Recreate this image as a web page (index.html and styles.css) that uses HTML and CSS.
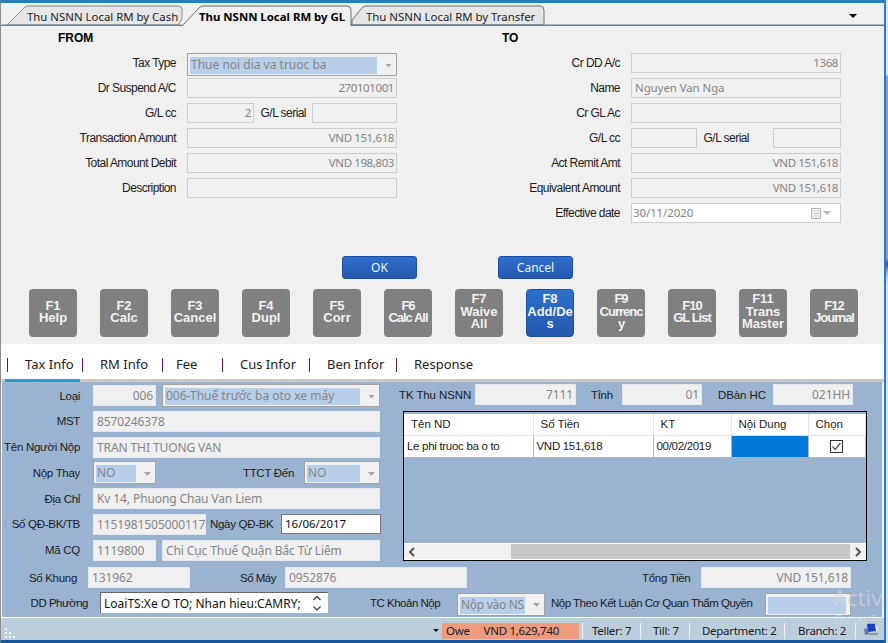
FILE: index.html
```html
<!DOCTYPE html>
<html lang="vi">
<head>
    <meta charset="UTF-8">
    <title>Thu NSNN Local RM by GL</title>
    <meta name="viewport" content="width=device-width, initial-scale=1.0">
    <link rel="stylesheet" href="styles.css">
</head>
<body>
    <div class="window">
        <div class="tabstrip">
            <svg class="tab-shapes" width="884" height="23" viewBox="0 0 884 23">
                <path d="M7 22 L25 4 Q26 3 28 3 L178 3 Q182 3 182 6 L182 16 L178 22 Z" fill="#e6e6e6" stroke="#8a8a8a"/>
                <path d="M352 22 L352 17 L362 5 Q364 3 366 3 L540 3 Q544 3 544 7 L544 22 Z" fill="#e6e6e6" stroke="#6f6f6f"/>
                <path d="M0 22.5 H182 M351 22.5 H884" stroke="#6d7d8c" stroke-width="2"/>
                <path d="M182 23 L199 5 Q201 3 203 3 L347 3 Q351 3 351 7 L351 23" fill="#f0f0f0" stroke="#6f6f6f"/>
                <path d="M849 11 H857 L853 15 Z" fill="#000"/>
            </svg>
            <span class="tab tab-cash">Thu NSNN Local RM by Cash</span>
            <span class="tab tab-gl">Thu NSNN Local RM by GL</span>
            <span class="tab tab-transfer">Thu NSNN Local RM by Transfer</span>
        </div>

        <div class="top-panel">
            <div class="transfer">
                <div class="side">
                    <h2>FROM</h2>
                    <div class="row">
                        <label>Tax Type</label>
                        <div class="select tax-select"><span class="picked wide">Thue noi dia va truoc ba</span><i class="caret"></i></div>
                    </div>
                    <div class="row"><label>Dr Suspend A/C</label><div class="field num">270101001</div></div>
                    <div class="row">
                        <label>G/L cc</label>
                        <div class="field num cc-left">2</div>
                        <label class="serial-left">G/L serial</label>
                        <div class="field serial-field-left"></div>
                    </div>
                    <div class="row"><label>Transaction Amount</label><div class="field num">VND 151,618</div></div>
                    <div class="row"><label>Total Amount Debit</label><div class="field num">VND 198,803</div></div>
                    <div class="row"><label>Description</label><div class="field"></div></div>
                </div>
                <div class="side">
                    <h2>TO</h2>
                    <div class="row"><label>Cr DD A/c</label><div class="field num">1368</div></div>
                    <div class="row"><label>Name</label><div class="field">Nguyen Van Nga</div></div>
                    <div class="row"><label>Cr GL Ac</label><div class="field"></div></div>
                    <div class="row">
                        <label>G/L cc</label>
                        <div class="field cc-right"></div>
                        <label class="serial-right">G/L serial</label>
                        <div class="field serial-field-right"></div>
                    </div>
                    <div class="row"><label>Act Remit Amt</label><div class="field num">VND 151,618</div></div>
                    <div class="row"><label>Equivalent Amount</label><div class="field num">VND 151,618</div></div>
                    <div class="row">
                        <label>Effective date</label>
                        <div class="field date-field">
                            <span>30/11/2020</span>
                            <svg width="28" height="14" viewBox="0 0 28 14">
                                <rect x="1.5" y="2.5" width="9" height="10" fill="#f4f4f4" stroke="#b5b5b5"/>
                                <path d="M1.5 5 H10.5 M3 7.5 H9 M3 10 H9" stroke="#c9c9c9"/>
                                <path d="M13 5 H21 L17 9 Z" fill="#b5b5b5"/>
                            </svg>
                        </div>
                    </div>
                </div>
            </div>

            <div class="actions">
                <button class="btn-blue">OK</button>
                <button class="btn-blue">Cancel</button>
            </div>

            <div class="fkeys">
                <button class="fkey">F1<br>Help</button>
                <button class="fkey">F2<br>Calc</button>
                <button class="fkey">F3<br>Cancel</button>
                <button class="fkey">F4<br>Dupl</button>
                <button class="fkey">F5<br>Corr</button>
                <button class="fkey tight">F6<br>Calc All</button>
                <button class="fkey">F7<br>Waive<br>All</button>
                <button class="fkey active">F8<br>Add/De<br>s</button>
                <button class="fkey tight">F9<br>Currenc<br>y</button>
                <button class="fkey tight">F10<br>GL List</button>
                <button class="fkey">F11<br>Trans<br>Master</button>
                <button class="fkey tight">F12<br>Journal</button>
            </div>
        </div>

        <div class="info-tabs">
            <span class="info-tab current">Tax Info</span>
            <span class="info-tab">RM Info</span>
            <span class="info-tab short">Fee</span>
            <span class="info-tab">Cus Infor</span>
            <span class="info-tab">Ben Infor</span>
            <span class="info-tab">Response</span>
        </div>

        <div class="info-panel">
            <div class="info-top">
                <div class="tax-form">
                    <div class="line">
                        <label>Loại</label>
                        <div class="field num w-code">006</div>
                        <div class="select grow"><span class="picked">006-Thuế trước bạ oto xe máy</span><i class="caret"></i></div>
                    </div>
                    <div class="line"><label>MST</label><div class="field grow">8570246378</div></div>
                    <div class="line"><label>Tên Người Nộp</label><div class="field grow">TRAN THI TUONG VAN</div></div>
                    <div class="line">
                        <label>Nộp Thay</label>
                        <div class="select w-code"><span class="picked">NO</span><i class="caret"></i></div>
                        <label class="ttct">TTCT Đến</label>
                        <div class="select w-ttct"><span class="picked">NO</span><i class="caret"></i></div>
                    </div>
                    <div class="line"><label>Địa Chỉ</label><div class="field grow">Kv 14, Phuong Chau Van Liem</div></div>
                    <div class="line">
                        <label>Số QĐ-BK/TB</label>
                        <div class="field w-decision">1151981505000117</div>
                        <label class="decision-date">Ngày QĐ-BK</label>
                        <div class="input-white">16/06/2017</div>
                    </div>
                    <div class="line">
                        <label>Mã CQ</label>
                        <div class="field w-code">1119800</div>
                        <div class="field grow">Chi Cục Thuế Quận Bắc Từ Liêm</div>
                    </div>
                </div>

                <div class="tax-side">
                    <div class="treasury">
                        <label class="tk">TK Thu NSNN</label>
                        <div class="field num w-tk">7111</div>
                        <label class="tinh">Tỉnh</label>
                        <div class="field num w-tinh">01</div>
                        <label class="dban">DBàn HC</label>
                        <div class="field num w-tinh">021HH</div>
                    </div>
                    <div class="grid-box">
                        <table class="grid">
                            <thead>
                                <tr>
                                    <th class="c-name">Tên ND</th>
                                    <th class="c-money">Số Tiền</th>
                                    <th class="c-kt">KT</th>
                                    <th class="c-content">Nội Dung</th>
                                    <th class="c-pick">Chọn</th>
                                </tr>
                            </thead>
                            <tbody>
                                <tr>
                                    <td>Le phi truoc ba o to</td>
                                    <td>VND 151,618</td>
                                    <td>00/02/2019</td>
                                    <td class="cell-focus"></td>
                                    <td class="cell-check">
                                        <svg width="13" height="13" viewBox="0 0 13 13">
                                            <rect x="0.5" y="0.5" width="12" height="12" fill="#fff" stroke="#333"/>
                                            <path d="M2.5 6.5 L5.2 9.5 L10.5 3" fill="none" stroke="#555" stroke-width="1.2"/>
                                        </svg>
                                    </td>
                                </tr>
                            </tbody>
                        </table>
                        <div class="hscroll">
                            <svg width="16" height="16" viewBox="0 0 16 16"><path d="M10 4 L6 8 L10 12" fill="none" stroke="#555" stroke-width="2"/></svg>
                            <div class="thumb"></div>
                            <svg width="16" height="16" viewBox="0 0 16 16"><path d="M6 4 L10 8 L6 12" fill="none" stroke="#555" stroke-width="2"/></svg>
                        </div>
                    </div>
                </div>
            </div>

            <div class="line frame-line">
                <label class="lb-frame">Số Khung</label>
                <div class="field w-frame">131962</div>
                <label class="lb-engine">Số Máy</label>
                <div class="field w-engine">0952876</div>
                <label class="lb-total">Tổng Tiền</label>
                <div class="field num w-total">VND 151,618</div>
            </div>
            <div class="line ward-line">
                <label class="lb-ward">DD Phường</label>
                <div class="spin-input">
                    <span>LoaiTS:Xe O TO; Nhan hieu:CAMRY;</span>
                    <svg width="14" height="20" viewBox="0 0 14 20">
                        <path d="M3.5 7 L7 3.5 L10.5 7 M3.5 13.5 L7 17 L10.5 13.5" fill="none" stroke="#444" stroke-width="1.4"/>
                    </svg>
                </div>
                <label class="lb-clause">TC Khoản Nộp</label>
                <div class="select w-clause"><span class="picked">Nộp vào NS</span><i class="caret"></i></div>
                <label class="lb-auth">Nộp Theo Kết Luận Cơ Quan Thẩm Quyền</label>
                <div class="select w-auth"><span class="picked fill"></span><i class="caret"></i></div>
            </div>
        </div>

        <div class="statusbar">
            <svg class="grip" width="14" height="12" viewBox="0 0 14 12">
                <path d="M3 1h2v2H3zM3 5h2v2H3zM7 5h2v2H7zM3 9h2v2H3zM7 9h2v2H7zM11 9h2v2h-2z" fill="#f4f6f8"/>
            </svg>
            <i class="status-caret"></i>
            <div class="owe"><span>Owe</span><span>VND 1,629,740</span></div>
            <span class="status-item s-teller">Teller: 7</span>
            <span class="status-item s-till">Till: 7</span>
            <span class="status-item s-dept">Department: 2</span>
            <span class="status-item s-branch">Branch: 2</span>
            <span class="status-item s-icon">
                <svg width="16" height="13" viewBox="0 0 16 13">
                    <path d="M4 1 L12 0 L13 8 L5 9 Z" fill="#1c3fc4"/>
                    <path d="M1 6 L5 5 L6 11 L2 12 Z" fill="#5a7fb0"/>
                    <path d="M6 10 H15 V12 H6 Z" fill="#8d99a8"/>
                    <path d="M12 1 L15 3 L15 8 L13 8 Z" fill="#dfe6f2"/>
                </svg>
            </span>
        </div>

        <div class="activation">
            <div class="act-title">Activate Windows</div>
            <div class="act-sub">Go to Settings to activate Windows.</div>
        </div>
    </div>
    <div class="backdrop"></div>
</body>
</html>
```

FILE: styles.css
```css
* {
    box-sizing: border-box;
}
html, body {
    margin: 0;
    padding: 0;
}
body {
    display: flex;
    width: 888px;
    height: 643px;
    overflow: hidden;
    font-family: "Liberation Sans", Arial, sans-serif;
    font-size: 11.5px;
    color: #1c1c1c;
    background: #dcdcdc;
}
.window {
    position: relative;
    flex: none;
    width: 886px;
    height: 643px;
    display: flex;
    flex-direction: column;
    overflow: hidden;
    background: #f0f0f0;
    border-top: 3px solid #2a7db8;
    border-left: 1px solid #8c8c8c;
    border-right: 2px solid #1b80d6;
    border-bottom: 3px solid #14599f;
}
.backdrop {
    flex: none;
    width: 2px;
    height: 643px;
    background: linear-gradient(#e4e4e4 0, #e4e4e4 75px, #8fa0b5 76px, #8fa0b5 258px, #2e4fb0 264px, #b9c2d0 274px, #e2e2e2 285px, #e2e2e2 100%);
}

/* top tabs */
.tabstrip {
    position: relative;
    flex: 0 0 23px;
    display: flex;
    align-items: center;
    padding-left: 26px;
    font-family: "Noto Sans", sans-serif;
    font-size: 11.4px;
}
.tab-shapes {
    position: absolute;
    left: -1px;
    top: 0;
}
.tab {
    position: relative;
    flex: none;
    padding-top: 3px;
    white-space: nowrap;
}
.tab-cash { width: 172px; }
.tab-gl { width: 167px; font-weight: 700; color: #000; }

/* FROM / TO */
.top-panel {
    flex: 0 0 318px;
}
.transfer {
    display: flex;
}
.side {
    flex: none;
    width: 444px;
}
.side:first-child {
    width: 443px;
}
.side h2 {
    margin: 5px 0 7px 57px;
    height: 15px;
    font-size: 12px;
    line-height: 15px;
    color: #000;
}
.side:last-child h2 {
    margin-left: 58px;
}
.row {
    display: flex;
    align-items: flex-start;
    height: 20px;
    margin-bottom: 5px;
}
.row > label {
    flex: none;
    width: 176px;
    margin-right: 11px;
    text-align: right;
    font-size: 12px;
    line-height: 20px;
    letter-spacing: -0.55px;
    white-space: nowrap;
}
.side:first-child .row > label:first-child {
    width: 175px;
}
.field {
    flex: none;
    width: 210px;
    height: 20px;
    padding: 0 2px 0 3px;
    line-height: 18px;
    font-family: "Noto Sans", sans-serif;
    font-size: 11.5px;
    letter-spacing: -0.1px;
    color: #858585;
    background: #f0f0f0;
    border: 1px solid #cdcdcd;
    white-space: nowrap;
    overflow: hidden;
}
.row .num {
    letter-spacing: -0.4px;
}
.num {
    text-align: right;
}
.row > .cc-left { width: 67px; margin-right: 6px; }
.row > .serial-left { width: 46px; margin-right: 6px; }
.serial-field-left { width: 85px; }
.row > .cc-right { width: 66px; margin-right: 6px; }
.row > .serial-right { width: 46px; margin-right: 24px; }
.serial-field-right { width: 68px; }
.date-field {
    display: flex;
    justify-content: space-between;
    align-items: center;
    padding-left: 1px;
    background: #fff;
}
.select {
    display: flex;
    align-items: center;
    height: 23px;
    padding: 2px 0 0 2px;
    background: #f0f0f0;
    border: 1px solid #a3a3a3;
    font-family: "Noto Sans", sans-serif;
    font-size: 12px;
    color: #858585;
    flex: none;
    overflow: hidden;
    white-space: nowrap;
}
.tax-select {
    width: 210px;
    margin-bottom: -3px;
}
.picked {
    flex: 1;
    min-width: 0;
    height: 17px;
    line-height: 16px;
    padding-left: 1px;
    background: #b8cfe9;
    overflow: hidden;
}
.caret {
    flex: none;
    width: 19px;
    height: 4px;
    background: linear-gradient(#a8a8a8, #a8a8a8) no-repeat;
    clip-path: polygon(8px 0, 15px 0, 11.5px 4px);
}

/* OK / Cancel */
.actions {
    display: flex;
    gap: 81px;
    margin-top: 28px;
    padding-left: 341px;
}
.btn-blue {
    width: 75px;
    height: 23px;
    padding: 0;
    font-family: "Noto Sans", sans-serif;
    font-size: 12px;
    color: #eaf2fb;
    background: linear-gradient(#2e6fcb, #2459ae);
    border: 1px solid #1c4ea3;
    border-radius: 3px;
}

/* function keys */
.fkeys {
    display: flex;
    gap: 23px;
    margin-top: 10px;
    padding-left: 28px;
}
.fkey {
    flex: none;
    width: 48px;
    height: 48px;
    padding: 0 0 2px;
    font-family: "Liberation Sans", Arial, sans-serif;
    font-size: 13px;
    font-weight: 700;
    line-height: 12.5px;
    color: #f2f2f2;
    background: #808080;
    border: 0;
    border-radius: 4px;
    white-space: nowrap;
}
.fkey.tight {
    letter-spacing: -1px;
}
.fkey.active {
    background: linear-gradient(#2e6fcb, #2459ae);
    border: 1px solid #1c4ea3;
}

/* second tabs */
.info-tabs {
    flex: 0 0 38px;
    display: grid;
    grid-template-columns: 75px 80px 60px 87px 87px auto;
    padding: 0 0 0 6px;
    background: #fff;
    border-bottom: 3px solid #c8c8c8;
    font-family: "Noto Sans", sans-serif;
    font-size: 13px;
    color: #222;
    position: relative;
}
.info-tab {
    position: relative;
    padding: 11px 0 0 18px;
}
.info-tab.short {
    padding-left: 14px;
}
.info-tab::before {
    content: "";
    position: absolute;
    left: 0;
    top: 14px;
    width: 1px;
    height: 14px;
    background: #5a1a5e;
}
.info-tab.current::after {
    content: "";
    position: absolute;
    left: -2px;
    right: 2px;
    bottom: -3px;
    height: 3px;
    background: #1ea1d8;
}

/* blue form */
.info-panel {
    flex: 0 0 236px;
    margin-right: 2px;
    padding-top: 3px;
    background: #99b3d0;
    border-left: 1px solid #fff;
    border-bottom: 1px solid #fff;
}
.info-top {
    display: flex;
    height: 182px;
}
.tax-form {
    flex: none;
    width: 378px;
    display: flex;
    flex-direction: column;
    gap: 4.8px;
}
.line {
    display: flex;
    align-items: center;
    height: 21px;
}
.line label {
    flex: none;
    white-space: nowrap;
    letter-spacing: -0.3px;
}
.tax-form .line > label:first-child {
    width: 78px;
    margin-right: 13px;
    text-align: right;
}
.line .field, .treasury .field {
    height: 21px;
    padding-left: 3px;
    font-size: 12px;
    line-height: 19px;
    border: 1px solid #e4e8ee;
}
.line .select {
    height: 23px;
}
.grow {
    flex: 1;
    min-width: 0;
}
.line .w-code { width: 63px; }
.w-code + .grow { margin-left: 6px; }
.tax-form .line .ttct { width: 92px; margin: 0 10px 0 46px; text-align: right; }
.line .w-ttct { width: 76px; }
.line .w-decision { width: 113px; }
.decision-date { width: 61px; margin: 0 10px 0 4px; }
.input-white {
    flex: none;
    width: 100px;
    height: 20px;
    padding-left: 3px;
    font-family: "Noto Sans", sans-serif;
    line-height: 18px;
    color: #111;
    background: #fff;
    border: 1px solid #777;
}
.tax-side {
    flex: none;
    width: 480px;
    margin-top: -1px;
}
.treasury {
    display: flex;
    align-items: center;
    height: 21px;
    padding-left: 19px;
}
.treasury label {
    flex: none;
    letter-spacing: -0.1px;
    white-space: nowrap;
}
.tk { width: 69px; }
.treasury .w-tk { width: 101px; margin-left: 7px; }
.tinh { width: 20px; margin-left: 15px; margin-right: 11px; }
.treasury .w-tinh { width: 80px; }
.dban { width: 45px; margin-left: 16px; margin-right: 10px; }
.grid-box {
    display: flex;
    flex-direction: column;
    justify-content: space-between;
    width: 464px;
    height: 150px;
    margin: 6px 0 0 23px;
    padding-top: 2px;
    border: 1.5px solid #000;
}
.grid {
    width: 100%;
    table-layout: fixed;
    border-collapse: collapse;
    font-family: "Liberation Sans", Arial, sans-serif;
    font-size: 11.5px;
}
.grid th {
    height: 21px;
    padding: 0 0 0 7px;
    font-weight: 400;
    text-align: left;
    background: #fff;
    border-right: 1px solid #e2e2e2;
    border-bottom: 1px solid #e2e2e2;
}
.grid td {
    height: 22px;
    padding: 0 0 0 3px;
    letter-spacing: -0.3px;
    background: #fff;
    border-right: 1px solid #b5b5b5;
    border-bottom: 1px solid #b5b5b5;
    white-space: nowrap;
}
.c-name { width: 129px; }
.c-money { width: 120px; }
.c-kt { width: 78px; }
.c-content { width: 77px; }
.grid .cell-focus {
    background: #0078d7;
}
.grid .cell-check {
    padding: 2px 0 0 0;
    text-align: center;
}
.hscroll {
    display: flex;
    align-items: stretch;
    height: 17px;
    background: #f0f0f0;
    border-top: 1px solid #fff;
    border-bottom: 1px solid #fff;
}
.hscroll .thumb {
    flex: 1;
    margin: 0 0 0 91px;
    background: #c8c8c8;
}

/* bottom rows */
.lb-frame { width: 75px; margin-right: 11px; text-align: right; }
.line .w-frame { width: 102px; }
.lb-engine { width: 35px; margin: 0 10px 0 50px; }
.line .w-engine { width: 182px; }
.lb-total { width: 48px; margin: 0 11px 0 175px; }
.line .w-total { width: 150px; }
.ward-line {
    margin-top: 4px;
}
.ward-line .select {
    margin-top: 3px;
}
.line .lb-ward, .line .lb-clause, .line .lb-auth, .line .lb-engine {
    letter-spacing: -0.5px;
}
.lb-ward { width: 86px; margin-right: 12px; text-align: right; }
.spin-input {
    flex: none;
    display: flex;
    align-items: center;
    justify-content: space-between;
    width: 228px;
    height: 21px;
    padding: 0 4px 0 3px;
    font-family: "Noto Sans", sans-serif;
    font-size: 12px;
    color: #111;
    background: #fff;
    border-left: 1px solid #666;
    border-top: 1px solid #666;
    white-space: nowrap;
}
.lb-clause { width: 70px; margin: 0 17px 0 42px; }
.w-clause { width: 88px; letter-spacing: -0.3px; }
.lb-auth { width: 202px; margin: 0 12px 0 6px; }
.w-auth { width: 86px; }
.picked.fill { flex: none; width: 78px; }

/* status bar */
.statusbar {
    position: relative;
    flex: 0 0 22px;
    display: flex;
    align-items: center;
    padding: 3px 0 0 432px;
    font-family: "Noto Sans", sans-serif;
    font-size: 11.5px;
    letter-spacing: -0.3px;
    background: #bccddc;
}
.grip {
    position: absolute;
    left: 1px;
    bottom: 1px;
}
.status-caret {
    width: 0;
    height: 0;
    margin-right: 3px;
    border: 3px solid transparent;
    border-top: 3px solid #111;
    border-bottom: 0;
}
.owe {
    flex: none;
    display: flex;
    gap: 14px;
    width: 137px;
    height: 16px;
    padding-left: 4px;
    line-height: 15px;
    background: #ee9a7c;
}
.status-item {
    flex: none;
    height: 16px;
    line-height: 15px;
    white-space: nowrap;
    border-left: 1px solid #eef2f6;
}
.s-teller { width: 58px; margin-left: 3px; padding-left: 9px; }
.s-till { width: 49px; padding-left: 12px; }
.s-dept { width: 95px; padding-left: 12px; }
.s-branch { width: 71px; padding-left: 13px; }
.s-icon { padding-left: 7px; }

/* windows watermark */
.activation {
    position: absolute;
    left: 832px;
    top: 582px;
    width: 300px;
    color: rgba(215, 215, 215, 0.65);
    font-family: "Noto Sans", sans-serif;
    white-space: nowrap;
}
.act-title { font-size: 22px; line-height: 24px; }
.act-sub { margin-top: 2px; font-size: 13px; line-height: 16px; }
```
